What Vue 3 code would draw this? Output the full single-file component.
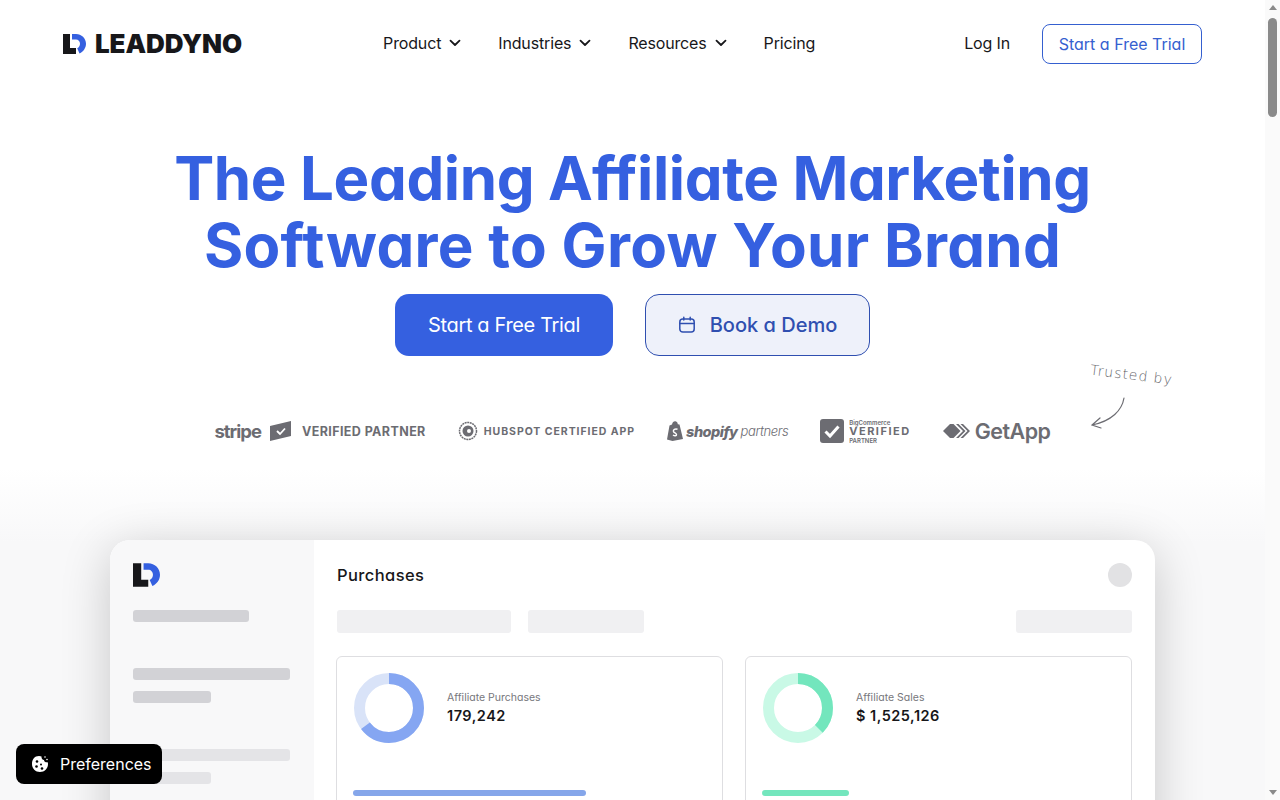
<template>
  <div class="page">
    <div class="main">
      <header class="nav">
        <a class="logo">
          <svg class="logo-mark" width="23" height="20" viewBox="0 0 23 20">
            <path d="M0 0H7V14H13V20H0Z" fill="#17171a" />
            <path d="M9 0H13C18.5 0 23 4.300 23 9.700C23 13.800 20.500 17.500 16.500 19.400L14.200 14.300C16.200 13.300 17 11.600 17 9.800C17 7.400 15.200 5.600 13 5.600H9Z" fill="#3560e0" />
          </svg>
          <span class="logo-text">LEADDYNO</span>
        </a>
        <nav class="links">
          <a v-for="link in links" :key="link.name" class="link">
            {{ link.name }}
            <svg v-if="link.menu" width="12" height="8" viewBox="0 0 12 8" fill="none">
              <path d="M1.500 1.700L6 6L10.500 1.700" stroke="#17171a" stroke-width="1.800" stroke-linecap="round" stroke-linejoin="round" />
            </svg>
          </a>
        </nav>
        <div class="nav-right">
          <a class="link">Log In</a>
          <button class="btn-outline">Start a Free Trial</button>
        </div>
      </header>

      <section class="hero">
        <h1><span class="line-one">The Leading Affiliate Marketing</span><br /><span class="line-two">Software to Grow Your Brand</span></h1>
        <div class="cta">
          <button class="btn-primary">Start a Free Trial</button>
          <button class="btn-demo">
            <svg width="18" height="18" viewBox="0 0 18 18" fill="none" stroke="#2f4fb0" stroke-width="1.500" stroke-linecap="round">
              <rect x="1.800" y="3" width="14.400" height="13" rx="3" />
              <path d="M1.800 7.500H16.200M5.800 1.200V4M12.200 1.200V4" />
            </svg>
            Book a Demo
          </button>
        </div>
        <div class="trust">
          <div class="partner">
            <span class="stripe">stripe</span>
            <svg width="22" height="20" viewBox="0 0 22 20">
              <path d="M0 5L21 0V15L0 20Z" fill="#6c6c72" />
              <path d="M7 10L10 13L15 7.500" fill="none" stroke="#fff" stroke-width="1.800" />
            </svg>
            <span class="stripe-note">VERIFIED PARTNER</span>
          </div>
          <div class="partner hubspot">
            <svg width="20" height="20" viewBox="0 0 20 20" fill="none">
              <circle cx="10" cy="10" r="8.500" stroke="#6c6c72" stroke-width="1.500" stroke-dasharray="2 .6" />
              <circle cx="10" cy="10" r="5.500" fill="#6c6c72" />
              <circle cx="11" cy="10" r="2" fill="#fff" />
            </svg>
            <span class="hubspot-note">HUBSPOT CERTIFIED APP</span>
          </div>
          <div class="partner shopify">
            <svg width="16" height="20" viewBox="0 0 16 20">
              <path d="M2.500 4.500L5 3.500C5.500 1 7 0 8.500 0.300C10 .6 10.700 1.800 10.800 3.200L12.500 3.500L16 18L5.500 20L0 18.500Z" fill="#6c6c72" />
              <path d="M10.500 8.300C8 7.500 6 8.800 6.500 10.500C7 12 9.500 12 9.500 13.700C9.500 15 7.500 15 6 14" fill="none" stroke="#fff" stroke-width="1.500" />
            </svg>
            <span class="shopify-name">shopify</span>
            <span class="shopify-note">partners</span>
          </div>
          <div class="partner bigc">
            <svg width="24" height="24" viewBox="0 0 24 24">
              <rect width="24" height="24" rx="3" fill="#6c6c72" />
              <path d="M5.500 12.500L10 17L18.500 7.500" fill="none" stroke="#fff" stroke-width="3" />
            </svg>
            <div class="bigc-text">
              <span class="bigc-top">BigCommerce</span>
              <span class="bigc-mid">VERIFIED</span>
              <span class="bigc-low">PARTNER</span>
            </div>
          </div>
          <div class="partner getapp">
            <svg width="27" height="16" viewBox="0 0 27 16" fill="#6c6c72">
              <path d="M0 8L7 1H10.500L17.500 8L10.500 15H7Z" />
              <path d="M13 1H15.500L22.500 8L15.500 15H13L20 8Z" />
              <path d="M17.500 1H20L27 8L20 15H17.500L24.500 8Z" />
            </svg>
            <span class="getapp-name">GetApp</span>
          </div>
          <div class="trusted">
            <span class="trusted-text">Trusted by</span>
            <svg class="trusted-arrow" width="36" height="32" viewBox="0 0 36 32" fill="none" stroke="#6c6c72" stroke-width="1.200" stroke-linecap="round">
              <path d="M34 1C32 13 22 24 2 28M10 21L2 28L11 31" />
            </svg>
          </div>
        </div>
      </section>

      <section class="showcase">
        <div class="dash">
          <aside class="side">
            <svg class="side-logo" width="27" height="24" viewBox="0 0 23 20">
              <path d="M0 0H7V14H13V20H0Z" fill="#17171a" />
              <path d="M9 0H13C18.500 0 23 4.300 23 9.700C23 13.800 20.500 17.500 16.500 19.400L14.200 14.300C16.200 13.300 17 11.600 17 9.800C17 7.400 15.200 5.600 13 5.600H9Z" fill="#3560e0" />
            </svg>
            <div class="bar first"></div>
            <div class="bar-group">
              <div class="bar full"></div>
              <div class="bar half"></div>
            </div>
            <div class="bar-group faded">
              <div class="bar full"></div>
              <div class="bar half"></div>
            </div>
          </aside>
          <div class="panel">
            <div class="panel-head">
              <h2>Purchases</h2>
              <span class="avatar"></span>
            </div>
            <div class="filters">
              <span class="filter wide"></span>
              <span class="filter"></span>
              <span class="filter push"></span>
            </div>
            <div class="cards">
              <div v-for="card in cards" :key="card.label" class="card">
                <div class="card-top">
                  <svg width="72" height="72" viewBox="0 0 72 72" fill="none">
                    <circle cx="36" cy="36" r="29.500" :stroke="card.track" stroke-width="11" />
                    <circle cx="36" cy="36" r="29.500" :stroke="card.color" stroke-width="11" pathLength="360"
                      :stroke-dasharray="`${card.angle} 360`" transform="rotate(-90 36 36)" />
                  </svg>
                  <div class="stat">
                    <span class="stat-label">{{ card.label }}</span>
                    <span class="stat-value">{{ card.value }}</span>
                  </div>
                </div>
                <div class="progress" :style="{ width: card.bar + 'px', background: card.barColor }"></div>
              </div>
            </div>
          </div>
        </div>
      </section>

      <button class="prefs">
        <svg width="18" height="18" viewBox="0 0 18 18">
          <path d="M8 1C9 1 10 1.200 10.500 1.500C10.300 3.500 11.500 5 13 5C13 6.500 14.500 7.500 16.700 7.300C17 8 17 8.500 17 9C17 13.500 13.500 17 9 17C4.500 17 1 13.500 1 9C1 4.500 3.500 1 8 1Z" fill="#fff" />
          <circle cx="6" cy="6.500" r="1.300" /><circle cx="5.500" cy="11.500" r="1.300" /><circle cx="10" cy="9.500" r="1" /><circle cx="11" cy="13.500" r="1.300" />
          <circle cx="14" cy="2" r=".8" fill="#fff" /><circle cx="16" cy="4.500" r=".8" fill="#fff" />
        </svg>
        Preferences
      </button>
    </div>

    <div class="scrollbar">
      <span class="arrow up"></span>
      <span class="thumb"></span>
      <span class="arrow down"></span>
    </div>
  </div>
</template>

<script setup>
const links = [
  { name: 'Product', menu: true },
  { name: 'Industries', menu: true },
  { name: 'Resources', menu: true },
  { name: 'Pricing', menu: false }
];

const cards = [
  { label: 'Affiliate Purchases', value: '179,242', angle: 233, color: '#85a6f2', track: '#d9e3f8', bar: 233, barColor: '#85a6ea' },
  { label: 'Affiliate Sales', value: '$ 1,525,126', angle: 135, color: '#73e6bd', track: '#c9f9e6', bar: 87, barColor: '#73e6bd' }
];
</script>

<style>
html,
body {
  margin: 0;
  overflow: hidden;
}
</style>

<style scoped>
.page {
  display: flex;
  height: 800px;
  overflow: hidden;
  font-family: Inter, "Liberation Sans", sans-serif;
  font-feature-settings: "cv11";
  color: #17171a;
}

.main {
  flex: 1;
  min-width: 0;
  display: flex;
  flex-direction: column;
  overflow: hidden;
}

.nav {
  display: flex;
  align-items: center;
  padding: 24px 63px 0;
  height: 40px;
}

.logo {
  display: flex;
  align-items: center;
  gap: 9px;
}

.logo-text {
  font-size: 26px;
  line-height: 24px;
  font-weight: 900;
  letter-spacing: -0.1px;
}

.links {
  display: flex;
  align-items: center;
  gap: 37px;
  margin-left: 141px;
}

.link {
  display: flex;
  align-items: center;
  gap: 8px;
  font-size: 16px;
  letter-spacing: -0.15px;
  margin-top: -2px;
}

.nav-right {
  display: flex;
  align-items: center;
  gap: 32px;
  margin-left: auto;
}

button {
  font-family: inherit;
  font-feature-settings: inherit;
  cursor: pointer;
}

.btn-outline {
  width: 160px;
  height: 40px;
  border: 1px solid #3560d0;
  border-radius: 8px;
  background: #fff;
  color: #3560d0;
  font-size: 16px;
}

.hero {
  display: flex;
  flex-direction: column;
  align-items: center;
  position: relative;
}

h1 {
  margin: 81px 0 0;
  font-size: 60px;
  line-height: 67px;
  font-weight: 700;
  color: #3560e0;
  text-align: center;
  white-space: nowrap;
}

.line-one {
  letter-spacing: -0.37px;
}

.line-two {
  letter-spacing: 0.3px;
}

.cta {
  display: flex;
  gap: 32px;
  margin-top: 15px;
}

.btn-primary {
  width: 218px;
  height: 62px;
  border: 0;
  border-radius: 14px;
  background: #3560e0;
  color: #fff;
  font-size: 20px;
  letter-spacing: -0.35px;
}

.btn-demo {
  display: flex;
  align-items: center;
  justify-content: center;
  gap: 14px;
  width: 225px;
  height: 62px;
  padding-left: 6px;
  border: 1px solid #2f4fb0;
  border-radius: 14px;
  background: #eef1fa;
  color: #2f4fb0;
  font-size: 20px;
  font-weight: 500;
}

.trust {
  display: flex;
  align-items: center;
  gap: 32px;
  height: 24px;
  margin-top: 63px;
  color: #6c6c72;
  position: relative;
}

.partner {
  display: flex;
  align-items: center;
  white-space: nowrap;
}

.stripe {
  font-size: 18.500px;
  font-weight: 700;
  letter-spacing: -1px;
  margin-right: 9px;
}

.stripe-note {
  margin-left: 10px;
  font-size: 12.500px;
  font-weight: 700;
  letter-spacing: 0.4px;
}

.hubspot {
  gap: 6px;
}

.hubspot-note {
  font-size: 10.500px;
  font-weight: 700;
  letter-spacing: 0.95px;
}

.shopify {
  gap: 3px;
}

.shopify-name {
  font-size: 14.500px;
  font-weight: 800;
  font-style: italic;
  letter-spacing: -0.5px;
}

.shopify-note {
  font-size: 13px;
  font-weight: 300;
  font-style: italic;
  letter-spacing: -0.4px;
}

.bigc {
  gap: 5px;
}

.bigc-text {
  display: flex;
  flex-direction: column;
}

.bigc-top,
.bigc-low {
  font-size: 6px;
  line-height: 7px;
  font-weight: 600;
}

.bigc-mid {
  font-size: 11px;
  line-height: 11px;
  font-weight: 700;
  letter-spacing: 1.500px;
}

.getapp {
  gap: 5px;
}

.getapp-name {
  font-size: 21.500px;
  font-weight: 600;
  letter-spacing: -0.5px;
}

.trusted {
  position: absolute;
  left: 876px;
  top: -52px;
  width: 90px;
  height: 80px;
}

.trusted-text {
  display: block;
  font-family: "DejaVu Sans", sans-serif;
  font-size: 14px;
  font-weight: 300;
  letter-spacing: 1px;
  color: #66666b;
  transform: rotate(7deg);
  white-space: nowrap;
}

.trusted-arrow {
  position: absolute;
  left: 0;
  top: 30px;
}

.showcase {
  flex: 1;
  margin-top: 10px;
  padding: 87px 0 0 110px;
  background: linear-gradient(#fff 15px, #f8f8f9 90px);
}

.dash {
  display: flex;
  width: 1045px;
  height: 400px;
  border-radius: 20px;
  background: #fff;
  overflow: hidden;
  box-shadow: 0 10px 50px rgba(0, 0, 0, 0.2);
}

.side {
  display: flex;
  flex-direction: column;
  width: 204px;
  padding: 23px;
  box-sizing: border-box;
  background: #f8f8f9;
}

.side-logo {
  margin-bottom: 23px;
}

.bar {
  height: 12px;
  border-radius: 3px;
  background: #d2d2d6;
}

.bar.first {
  width: 116px;
}

.bar-group {
  display: flex;
  flex-direction: column;
  gap: 11px;
  margin-top: 46px;
}

.bar.full {
  width: 157px;
}

.bar.half {
  width: 78px;
}

.bar-group.faded .bar {
  background: #e4e4e7;
}

.panel {
  flex: 1;
  padding: 23px 23px 0;
}

.panel-head {
  display: flex;
  align-items: center;
  justify-content: space-between;
  height: 24px;
}

h2 {
  margin: 0;
  font-size: 16.500px;
  font-weight: 500;
  letter-spacing: 0.4px;
}

.avatar {
  width: 24px;
  height: 24px;
  border-radius: 50%;
  background: #e2e2e4;
}

.filters {
  display: flex;
  gap: 17px;
  margin-top: 23px;
}

.filter {
  width: 116px;
  height: 23px;
  border-radius: 3px;
  background: #f0f0f2;
}

.filter.wide {
  width: 174px;
}

.filter.push {
  margin-left: auto;
}

.cards {
  display: grid;
  grid-template-columns: 387px 387px;
  gap: 22px;
  margin: 23px 0 0 -1px;
}

.card {
  height: 200px;
  padding: 15px 16px;
  box-sizing: border-box;
  border: 1px solid #dedee1;
  border-radius: 6px;
}

.card-top {
  display: flex;
  align-items: center;
  gap: 22px;
}

.stat {
  display: flex;
  flex-direction: column;
  gap: 3px;
  margin-top: -2px;
}

.stat-label {
  font-size: 10.500px;
  color: #77777c;
}

.stat-value {
  font-size: 14.500px;
  font-weight: 600;
  letter-spacing: 0.5px;
}

.progress {
  height: 6px;
  margin-top: 46px;
  border-radius: 3px;
}

.prefs {
  position: fixed;
  left: 16px;
  bottom: 16px;
  display: flex;
  align-items: center;
  gap: 11px;
  height: 40px;
  width: 146px;
  padding: 0 0 0 15px;
  border: 0;
  border-radius: 8px;
  background: #000;
  color: #fff;
  font-size: 16px;
}

.scrollbar {
  display: flex;
  flex-direction: column;
  align-items: center;
  width: 15px;
  flex-shrink: 0;
  background: #fafafa;
}

.arrow {
  width: 0;
  height: 0;
  border-left: 4.500px solid transparent;
  border-right: 4.500px solid transparent;
}

.arrow.up {
  margin-top: 5px;
  border-bottom: 5px solid #8a8a8a;
}

.arrow.down {
  margin-top: auto;
  margin-bottom: 5px;
  border-top: 5px solid #8a8a8a;
}

.thumb {
  width: 9px;
  height: 99px;
  margin-top: 8px;
  border-radius: 5px;
  background: #8a8a8a;
}
</style>
